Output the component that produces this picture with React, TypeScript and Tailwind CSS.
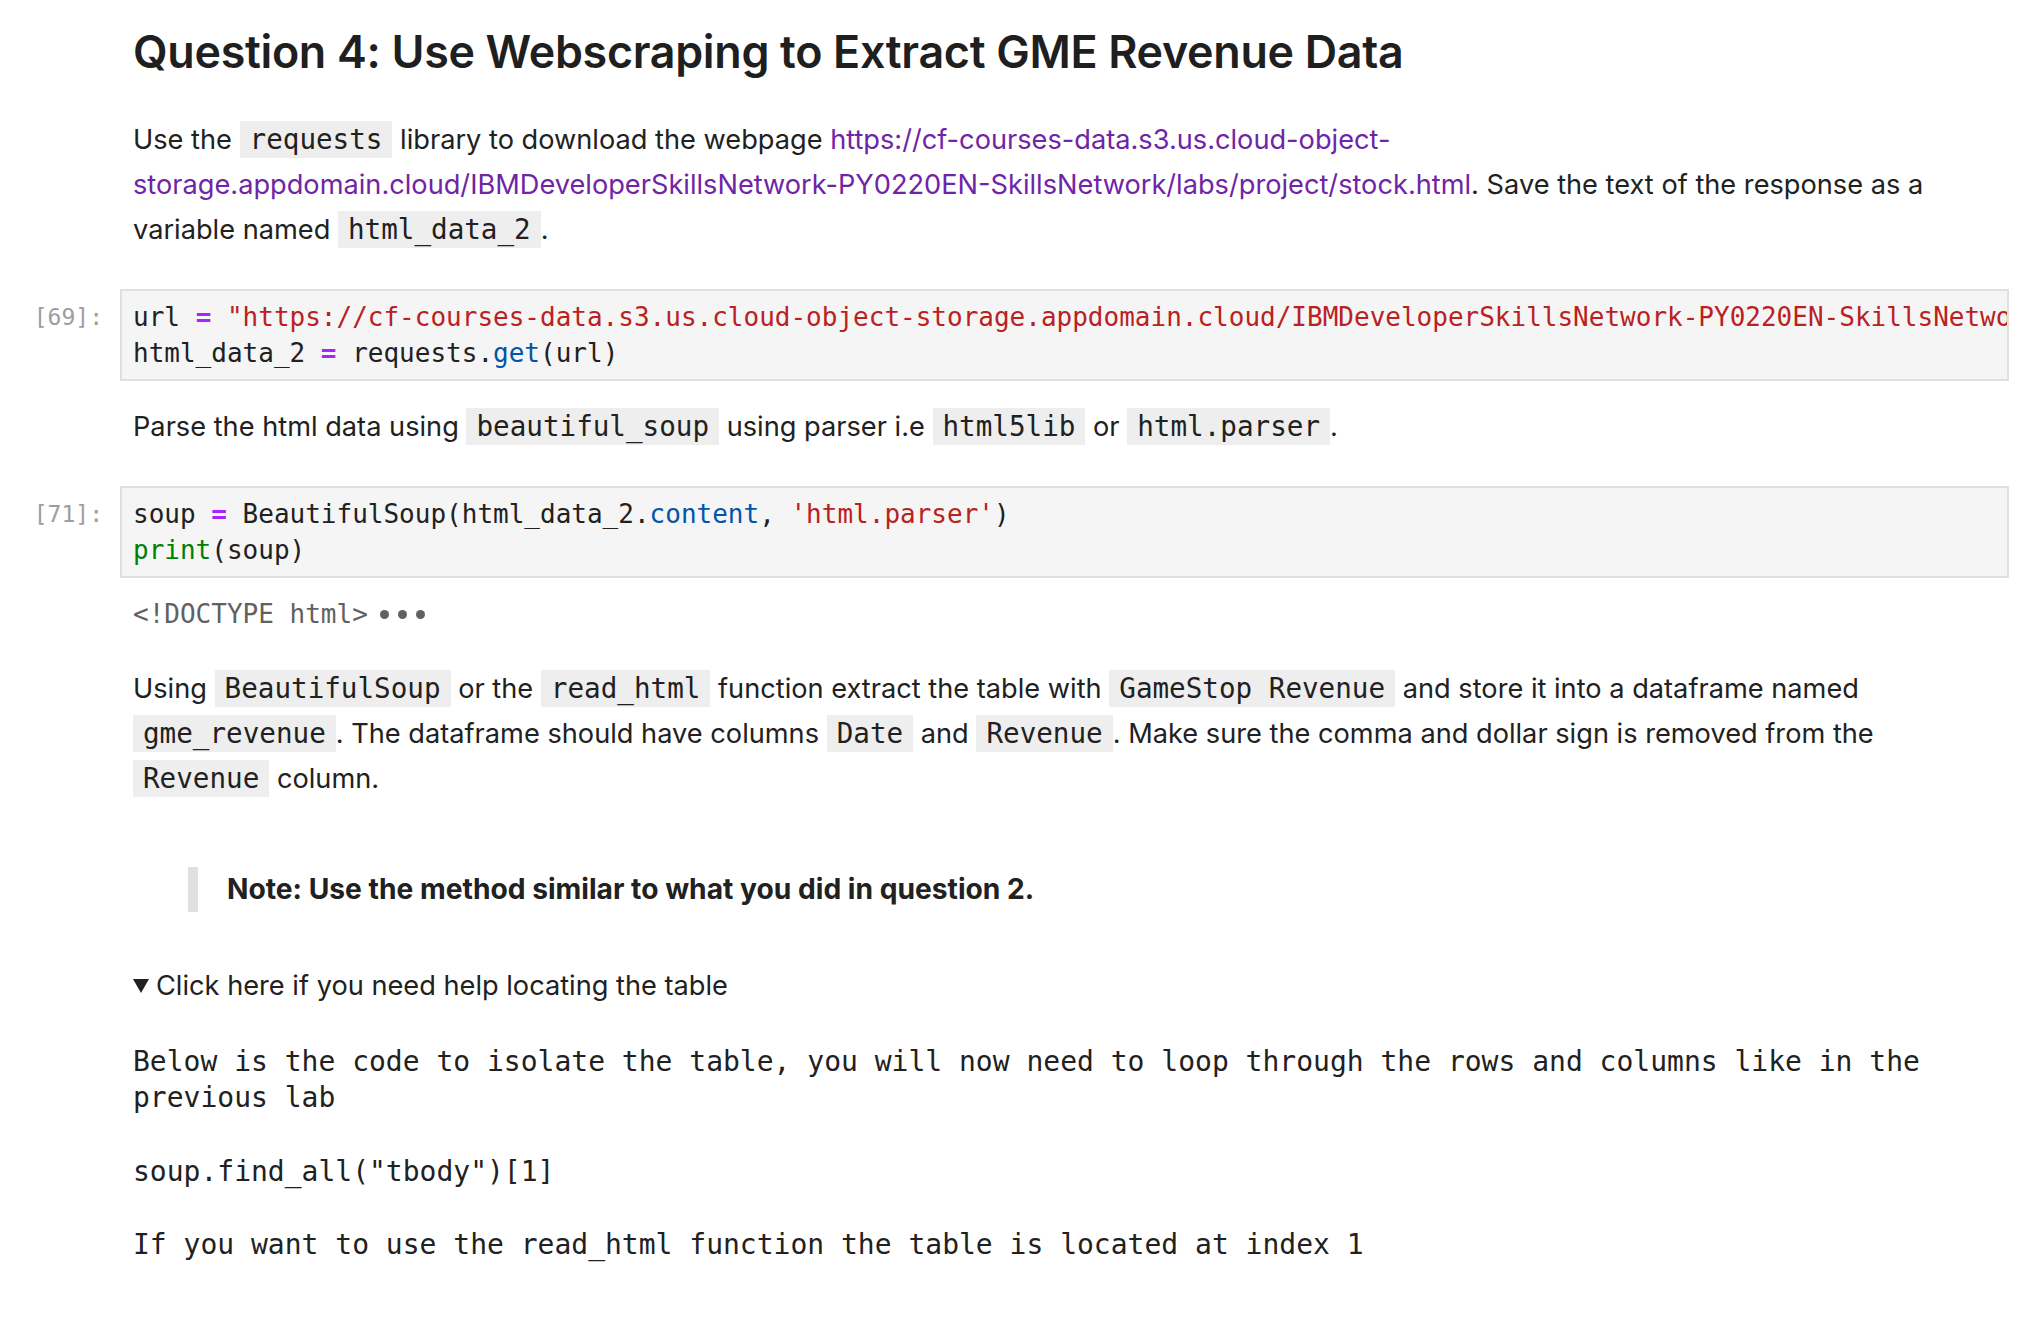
const sans = "font-['Inter',sans-serif]";
const mono = "font-['DejaVu_Sans_Mono',monospace]";

function Code({ children }: { children: React.ReactNode }) {
  return (
    <code className={`${mono} bg-[#eeeeee] px-[10px] py-[2px] text-[27.6px] text-[#212121]`}>
      {children}
    </code>
  );
}

function Op() {
  return <span className="font-bold text-[#aa22ff]">=</span>;
}

function CodeCell({ n, children }: { n: number; children: React.ReactNode }) {
  return (
    <div className="flex">
      <div
        className={`${mono} w-[120px] shrink-0 pr-[17px] pt-[10px] text-right text-[23px] leading-[36px] text-[#9e9e9e]`}
      >
        [{n}]:
      </div>
      <div className="min-w-0 flex-1 overflow-hidden border-2 border-[#e0e0e0] bg-[#f5f5f5] px-[11px] py-[8px]">
        <pre className={`${mono} whitespace-pre text-[26px] leading-[36px] text-[#212121]`}>
          {children}
        </pre>
      </div>
    </div>
  );
}

export default function App() {
  return (
    <div className={`${sans} min-h-screen bg-white pr-[15px] text-[#212121]`}>
      <div className="pl-[133px] pt-[22px]">
        <h2 className="text-[44.8px] leading-[60px] font-semibold tracking-[-0.3px] text-[#1f1f1f]">
          Question 4: Use Webscraping to Extract GME Revenue Data
        </h2>
        <p className="mt-[35px] text-[27.2px] leading-[45px]">
          Use the <Code>requests</Code> library to download the webpage{" "}
          <a className="text-[#7024a6]">
            https://cf-courses-data.s3.us.cloud-object-storage.appdomain.cloud/IBMDeveloperSkillsNetwork-PY0220EN-SkillsNetwork/labs/project/stock.html
          </a>
          . Save the text of the response as a variable named <Code>html_data_2</Code>.
        </p>
      </div>

      <div className="mt-[37px]">
        <CodeCell n={69}>
          {"url "}
          <Op />{" "}
          <span className="text-[#ba2121]">
            "https://cf-courses-data.s3.us.cloud-object-storage.appdomain.cloud/IBMDeveloperSkillsNetwork-PY0220EN-SkillsNetwork/labs/project/stock.html"
          </span>
          {"\nhtml_data_2 "}
          <Op />
          {" requests."}
          <span className="text-[#0055aa]">get</span>
          {"(url)"}
        </CodeCell>
      </div>

      <div className="pl-[133px]">
        <p className="mt-[23px] text-[27.2px] leading-[45px]">
          Parse the html data using <Code>beautiful_soup</Code> using parser i.e <Code>html5lib</Code> or{" "}
          <Code>html.parser</Code>.
        </p>
      </div>

      <div className="mt-[37px]">
        <CodeCell n={71}>
          {"soup "}
          <Op />
          {" BeautifulSoup(html_data_2."}
          <span className="text-[#0055aa]">content</span>
          {", "}
          <span className="text-[#ba2121]">'html.parser'</span>
          {")\n"}
          <span className="text-[#008000]">print</span>
          {"(soup)"}
        </CodeCell>
      </div>

      <div className="pl-[133px]">
        <div className={`${mono} mt-[18px] flex items-center text-[26px] leading-[36px] text-[#616161]`}>
          <span>&lt;!DOCTYPE html&gt;</span>
          <span className="ml-[12px] flex gap-[9px]">
            <span className="h-[9px] w-[9px] rounded-full bg-[#616161]" />
            <span className="h-[9px] w-[9px] rounded-full bg-[#616161]" />
            <span className="h-[9px] w-[9px] rounded-full bg-[#616161]" />
          </span>
        </div>

        <p className="mt-[34px] text-[27.2px] leading-[45px]">
          Using <Code>BeautifulSoup</Code> or the <Code>read_html</Code> function extract the table with{" "}
          <Code>GameStop Revenue</Code> and store it into a dataframe named <Code>gme_revenue</Code>. The
          dataframe should have columns <Code>Date</Code> and <Code>Revenue</Code>. Make sure the comma and
          dollar sign is removed from the <Code>Revenue</Code> column.
        </p>

        <blockquote className="mt-[66px] ml-[55px] border-l-[10px] border-[#e0e0e0] pl-[29px]">
          <p className="text-[28.2px] leading-[45px] font-bold">
            Note: Use the method similar to what you did in question 2.
          </p>
        </blockquote>

        <div className="mt-[51px] flex items-center text-[27.2px] leading-[45px]">
          <svg width="16" height="14" viewBox="0 0 16 14" className="mr-[7px]">
            <path d="M0 0 H16 L8 14 Z" fill="#212121" />
          </svg>
          <span>Click here if you need help locating the table</span>
        </div>

        <div className={`${mono} text-[28px] leading-[36px] text-[#212121]`}>
          <p className="mt-[36px] whitespace-pre-wrap">
            Below is the code to isolate the table, you will now need to loop through the rows and columns like in the previous lab
          </p>
          <p className="mt-[38px]">soup.find_all("tbody")[1]</p>
          <p className="mt-[37px]">If you want to use the read_html function the table is located at index 1</p>
        </div>
      </div>
    </div>
  );
}
